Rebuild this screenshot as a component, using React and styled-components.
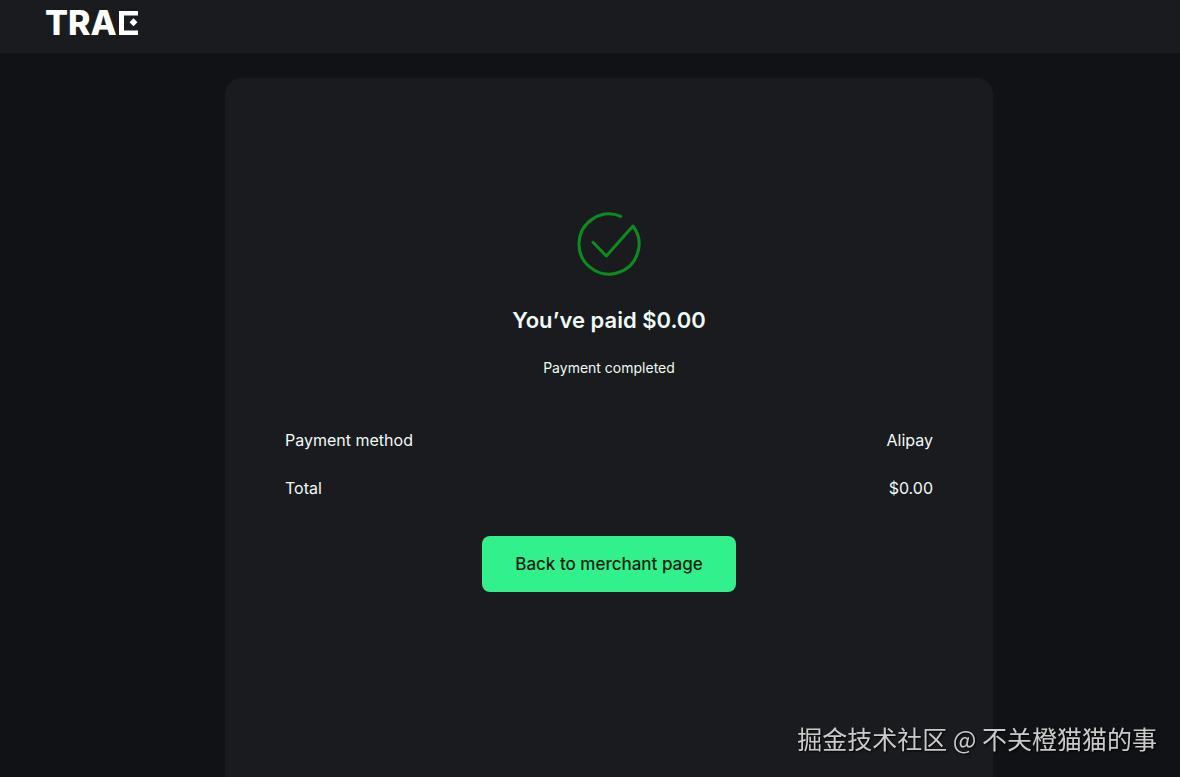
import React from 'react';
import styled, { createGlobalStyle } from 'styled-components';

const Color = {
	Page: '#111216',
	Panel: '#1a1b1e',
	Text: '#effaf5',
	Green: '#32f08c',
	Check: '#0b8c1f',
	White: '#ffffff',
};

const GlobalStyle = createGlobalStyle`
	* {
		box-sizing: border-box;
	}

	body {
		margin: 0;
		background-color: ${Color.Page};
		color: ${Color.Text};
		font-family: Inter, 'Noto Sans CJK SC', sans-serif;
	}
`

const Page = styled.div`
	display: flex;
	flex-direction: column;
	min-height: 100vh;
`

const Header = styled.header`
	display: flex;
	padding: 6px 45px 13px;
	background-color: ${Color.Panel};
	border-bottom: 1px solid #15161a;
`

const Logo = styled.a`
	display: flex;
	align-items: center;
	gap: 2px;
	color: ${Color.White};
	font-size: 34px;
	font-weight: 800;
	line-height: 34px;
	text-decoration: none;
`

const Main = styled.main`
	display: flex;
	flex: 1;
	justify-content: center;
	padding: 24px 0 0 38px;
`

const Card = styled.section`
	display: flex;
	flex-direction: column;
	align-items: center;
	width: 100%;
	max-width: 768px;
	padding: 134px 60px 60px;
	background-color: ${Color.Panel};
	border-radius: 16px 16px 0 0;
`

const Title = styled.h1`
	margin: 28px 0 0;
	font-size: 22px;
	font-weight: 600;
	line-height: 32px;
`

const Status = styled.p`
	margin: 22px 0 0;
	font-size: 14px;
	line-height: 20px;
`

const Details = styled.dl`
	display: flex;
	flex-direction: column;
	gap: 24px;
	width: 100%;
	margin: 50px 0 0;
`

const DetailRow = styled.div`
	display: flex;
	justify-content: space-between;
	font-size: 16px;
	line-height: 24px;
`

const DetailValue = styled.dd`
	margin: 0;
`

const BackButton = styled.button`
	margin-top: 36px;
	padding: 16px 33px;
	border: none;
	border-radius: 8px;
	background-color: ${Color.Green};
	color: #0a1f14;
	font-family: inherit;
	font-size: 17px;
	font-weight: 500;
	line-height: 24px;
	cursor: pointer;
`

const Watermark = styled.div`
	position: fixed;
	right: 23px;
	bottom: 21px;
	color: #cacacb;
	font-family: 'Noto Sans CJK SC', sans-serif;
	font-size: 25px;
	line-height: 36px;
	text-shadow: 1px 1px 2px #000000;
`

const LogoMark = () => (
	<svg width="19" height="24" viewBox="0 0 19 24" fill="currentColor" aria-hidden="true">
		<rect x="0" y="0" width="5" height="24" />
		<rect x="0" y="0" width="19" height="4.5" />
		<rect x="0" y="19.5" width="19" height="4.5" />
		<rect x="11.7" y="8.5" width="5.6" height="5.6" transform="rotate(45 14.5 11.3)" />
	</svg>
)

const CheckIcon = () => (
	<svg width="64" height="64" viewBox="0 0 64 64" fill="none" aria-hidden="true">
		<path
			d="M43.7 4.4A30 30 0 1 0 56 14L29.3 44 16 30.3"
			stroke={Color.Check}
			strokeWidth="3"
			strokeLinecap="round"
			strokeLinejoin="round"
		/>
	</svg>
)

const details = [
	{ label: 'Payment method', value: 'Alipay' },
	{ label: 'Total', value: '$0.00' },
];

const App = () => {
	return (
		<Page>
			<GlobalStyle />
			<Header>
				<Logo href="#" aria-label="TRAE">
					TRA
					<LogoMark />
				</Logo>
			</Header>
			<Main>
				<Card>
					<CheckIcon />
					<Title>You’ve paid $0.00</Title>
					<Status>Payment completed</Status>
					<Details>
						{details.map(({ label, value }) => (
							<DetailRow key={label}>
								<dt>{label}</dt>
								<DetailValue>{value}</DetailValue>
							</DetailRow>
						))}
					</Details>
					<BackButton type="button">Back to merchant page</BackButton>
				</Card>
			</Main>
			<Watermark>掘金技术社区 @ 不关橙猫猫的事</Watermark>
		</Page>
	);
}

export default App;
